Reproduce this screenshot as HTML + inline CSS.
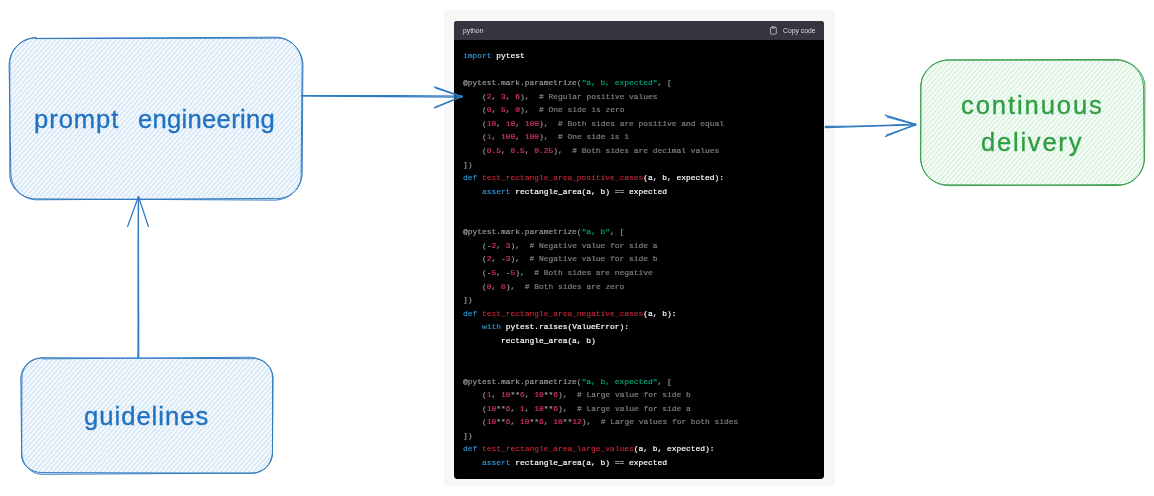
<!DOCTYPE html>
<html lang="en"><head><meta charset="utf-8"><title>prompt engineering to continuous delivery</title>
<style>
html,body{margin:0;padding:0;background:#fff;}
body{width:1154px;height:496px;position:relative;overflow:hidden;font-family:"Liberation Sans",sans-serif;}
.panel{position:absolute;left:444.2px;top:10.2px;width:391.3px;height:475.7px;background:#f7f7f8;}
.cb{position:absolute;left:454.1px;top:20.8px;width:369.9px;height:457.9px;background:#000;border-radius:3.4px;overflow:hidden;}
.hd{position:absolute;left:0;top:0;right:0;height:19.2px;background:#343541;color:#d9d9e3;font-size:6.8px;line-height:18.6px;}
.hd .lang{will-change:transform;position:absolute;left:8.9px;top:1.1px;}
.hd .copy{will-change:transform;position:absolute;left:328.5px;top:1.1px;white-space:nowrap;}
.hd svg{position:absolute;left:315.1px;top:5.4px;width:8.8px;height:8.8px;}
pre{position:absolute;left:8.9px;top:27.8px;margin:0;font-family:"Liberation Mono",monospace;font-size:7.91px;line-height:13.56px;color:#fff;white-space:pre;will-change:transform;-webkit-text-stroke:0.18px currentColor;}
pre .t{-webkit-text-stroke:0}.k{color:#2e95d3}.s{color:#00a67d}.n{color:#df3079}.t{color:#e62b3c}.c{color:#808080}.m{color:#999}
.draw{position:absolute;left:0;top:0;}
.hand{will-change:transform;position:absolute;white-space:pre;font-size:25.6px;line-height:30px;-webkit-text-stroke:0.35px currentColor;}
.b{color:#1f72c1}.g{color:#2f9e44}
</style></head><body>
<div class="panel"></div>
<div class="cb">
<div class="hd"><span class="lang">python</span>
<svg viewBox="0 0 24 24" fill="none" stroke="#d9d9e3" stroke-width="2" stroke-linecap="round" stroke-linejoin="round"><path d="M16 4h2a2 2 0 0 1 2 2v14a2 2 0 0 1-2 2H6a2 2 0 0 1-2-2V6a2 2 0 0 1 2-2h2"/><rect x="8" y="2" width="8" height="4" rx="1" ry="1"/></svg>
<span class="copy">Copy code</span></div>
<pre><span class="k">import</span> pytest

<span class="m">@pytest.mark.parametrize(</span><span class="s">"a, b, expected"</span><span class="m">, [</span>
<span class="m">    (</span><span class="n">2</span><span class="m">, </span><span class="n">3</span><span class="m">, </span><span class="n">6</span><span class="m">),  </span><span class="c"># Regular positive values</span>
<span class="m">    (</span><span class="n">0</span><span class="m">, </span><span class="n">5</span><span class="m">, </span><span class="n">0</span><span class="m">),  </span><span class="c"># One side is zero</span>
<span class="m">    (</span><span class="n">10</span><span class="m">, </span><span class="n">10</span><span class="m">, </span><span class="n">100</span><span class="m">),  </span><span class="c"># Both sides are positive and equal</span>
<span class="m">    (</span><span class="n">1</span><span class="m">, </span><span class="n">100</span><span class="m">, </span><span class="n">100</span><span class="m">),  </span><span class="c"># One side is 1</span>
<span class="m">    (</span><span class="n">0.5</span><span class="m">, </span><span class="n">0.5</span><span class="m">, </span><span class="n">0.25</span><span class="m">),  </span><span class="c"># Both sides are decimal values</span>
<span class="m">])</span>
<span class="k">def</span> <span class="t">test_rectangle_area_positive_cases</span>(a, b, expected):
    <span class="k">assert</span> rectangle_area(a, b) == expected


<span class="m">@pytest.mark.parametrize(</span><span class="s">"a, b"</span><span class="m">, [</span>
<span class="m">    (-</span><span class="n">2</span><span class="m">, </span><span class="n">3</span><span class="m">),  </span><span class="c"># Negative value for side a</span>
<span class="m">    (</span><span class="n">2</span><span class="m">, -</span><span class="n">3</span><span class="m">),  </span><span class="c"># Negative value for side b</span>
<span class="m">    (-</span><span class="n">5</span><span class="m">, -</span><span class="n">5</span><span class="m">),  </span><span class="c"># Both sides are negative</span>
<span class="m">    (</span><span class="n">0</span><span class="m">, </span><span class="n">0</span><span class="m">),  </span><span class="c"># Both sides are zero</span>
<span class="m">])</span>
<span class="k">def</span> <span class="t">test_rectangle_area_negative_cases</span>(a, b):
    <span class="k">with</span> pytest.raises(ValueError):
        rectangle_area(a, b)


<span class="m">@pytest.mark.parametrize(</span><span class="s">"a, b, expected"</span><span class="m">, [</span>
<span class="m">    (</span><span class="n">1</span><span class="m">, </span><span class="n">10</span><span class="m">**</span><span class="n">6</span><span class="m">, </span><span class="n">10</span><span class="m">**</span><span class="n">6</span><span class="m">),  </span><span class="c"># Large value for side b</span>
<span class="m">    (</span><span class="n">10</span><span class="m">**</span><span class="n">6</span><span class="m">, </span><span class="n">1</span><span class="m">, </span><span class="n">10</span><span class="m">**</span><span class="n">6</span><span class="m">),  </span><span class="c"># Large value for side a</span>
<span class="m">    (</span><span class="n">10</span><span class="m">**</span><span class="n">6</span><span class="m">, </span><span class="n">10</span><span class="m">**</span><span class="n">6</span><span class="m">, </span><span class="n">10</span><span class="m">**</span><span class="n">12</span><span class="m">),  </span><span class="c"># Large values for both sides</span>
<span class="m">])</span>
<span class="k">def</span> <span class="t">test_rectangle_area_large_values</span>(a, b, expected):
    <span class="k">assert</span> rectangle_area(a, b) == expected</pre>
</div>
<svg class="draw" width="1154" height="496" viewBox="0 0 1154 496">
<defs>
<pattern id="hb" width="3.52" height="3.52" patternUnits="userSpaceOnUse" patternTransform="rotate(-49)">
<rect width="3.52" height="3.52" fill="#f6fafe"/><line x1="0" y1="1" x2="3.52" y2="1" stroke="#b9d3ed" stroke-width="0.85"/></pattern>
<pattern id="hg" width="3.52" height="3.52" patternUnits="userSpaceOnUse" patternTransform="rotate(-49)">
<rect width="3.52" height="3.52" fill="#f7fdf8"/><line x1="0" y1="1" x2="3.52" y2="1" stroke="#bfe5c6" stroke-width="0.85"/></pattern>
</defs>
<path d="M36.0,37.7 L275.9,37.7 C290.3,37.7 301.9,49.3 301.9,63.7 L301.9,173.4 C301.9,187.8 290.3,199.4 275.9,199.4 L36.0,199.4 C21.6,199.4 10.0,187.8 10.0,173.4 L10.0,63.7 C10.0,49.3 21.6,37.7 36.0,37.7Z" fill="url(#hb)" stroke="none"/>
<path d="M35.3,38.4 L276.4,37.2 C290.3,37.7 301.8,49.3 302.2,64.3 L301.1,172.5 C302.6,187.8 290.3,199.3 276.4,198.4 L35.9,199.8 C21.6,198.9 10.9,187.8 10.8,172.5 L9.1,63.8 C10.9,49.3 21.6,37.5 36.0,37.7Z" fill="none" stroke="#2f79c0" stroke-width="0.98"/>
<path d="M35.5,38.6 L275.2,38.1 C290.3,36.9 301.4,49.3 302.9,63.1 L302.2,173.3 C301.8,187.8 290.3,199.4 275.3,200.1 L35.2,198.9 C21.6,198.4 9.5,187.8 9.8,174.2 L9.8,62.9 C9.5,49.3 21.6,38.7 36.0,37.7Z" fill="none" stroke="#2f79c0" stroke-width="0.98"/>

<path d="M41.7,358.0 L252.3,358.0 C263.3,358.0 272.3,367.0 272.3,378.0 L272.3,453.3 C272.3,464.3 263.3,473.3 252.3,473.3 L41.7,473.3 C30.7,473.3 21.7,464.3 21.7,453.3 L21.7,378.0 C21.7,367.0 30.7,358.0 41.7,358.0Z" fill="url(#hb)" stroke="none"/>
<path d="M42.6,358.9 L251.4,357.2 C263.3,358.7 272.8,367.0 272.6,377.6 L272.5,453.5 C272.5,464.3 263.3,472.6 252.2,473.1 L42.1,474.3 C30.7,474.2 21.8,464.3 21.6,452.8 L20.8,377.1 C21.6,367.0 30.7,357.6 41.7,358.0Z" fill="none" stroke="#2f79c0" stroke-width="0.98"/>
<path d="M41.6,357.7 L251.6,358.7 C263.3,357.0 272.3,367.0 273.1,377.2 L272.4,453.5 C271.4,464.3 263.3,473.1 252.7,473.2 L42.2,472.6 C30.7,472.8 20.9,464.3 21.7,454.1 L21.9,378.5 C21.5,367.0 30.7,358.5 41.7,358.0Z" fill="none" stroke="#2f79c0" stroke-width="0.98"/>

<path d="M948.5,60.0 L1116.6,60.0 C1132.1,60.0 1144.6,72.5 1144.6,88.0 L1144.6,157.5 C1144.6,173.0 1132.1,185.5 1116.6,185.5 L948.5,185.5 C933.0,185.5 920.5,173.0 920.5,157.5 L920.5,88.0 C920.5,72.5 933.0,60.0 948.5,60.0Z" fill="url(#hg)" stroke="none"/>
<path d="M948.0,60.1 L1116.3,60.2 C1132.1,60.3 1143.7,72.5 1143.6,88.7 L1144.1,157.0 C1145.6,173.0 1132.1,185.4 1117.3,185.5 L948.8,184.8 C933.0,185.8 921.2,173.0 920.5,158.0 L920.8,87.1 C921.0,72.5 933.0,60.2 948.5,60.0Z" fill="none" stroke="#3b9f4e" stroke-width="0.98"/>
<path d="M948.6,59.9 L1116.8,59.4 C1132.1,60.6 1145.2,72.5 1144.9,87.3 L1144.6,157.2 C1144.1,173.0 1132.1,186.4 1117.6,184.6 L949.2,185.7 C933.0,185.3 920.1,173.0 920.8,157.4 L920.9,88.3 C919.8,72.5 933.0,60.5 948.5,60.0Z" fill="none" stroke="#3b9f4e" stroke-width="0.98"/>

<g fill="none" stroke="#2f79c0" stroke-width="1.25" stroke-linecap="round">
<path d="M301.5,95.5 C350,95.4 410,95.8 462.2,96.0"/>
<path d="M301.5,96.0 C360,96.5 420,96.4 462.2,97.1"/>
<path d="M462.2,96.5 L434.3,86.8"/><path d="M462.2,96.9 L436,88.2"/>
<path d="M462.2,96.5 L434.6,107.9"/><path d="M462.2,96.3 L435.5,107.0"/>
<path d="M138.0,357.5 C137.9,300 138.3,250 138.4,196.5"/>
<path d="M138.7,357.5 C138.8,300 138.1,250 138.6,196.8"/>
<path d="M138.5,196.5 L127.6,226.5"/><path d="M138.5,196.5 L148.4,226.5"/>
<path d="M825.3,127.6 C850,127.0 890,125.4 915.7,124.9"/>
<path d="M825.3,126.3 C855,126.3 890,125.2 915.7,124.0"/>
<path d="M915.7,124.4 L885.1,115"/><path d="M915.7,124.6 L887,116.8"/>
<path d="M915.7,124.4 L885.5,136.5"/><path d="M915.7,124.8 L886.5,135.0"/>
</g>
</svg>
<div class="hand b" id="t1" style="left:34.3px;top:103.7px;"><span style="letter-spacing:0.95px">prompt</span><span style="letter-spacing:11.6px"> </span><span style="letter-spacing:0.28px">engineering</span></div>
<div class="hand b" id="t2" style="left:84.3px;top:400.9px;letter-spacing:1.0px">guidelines</div>
<div class="hand g" id="t3" style="left:961.2px;top:89.7px;letter-spacing:1.9px">continuous</div>
<div class="hand g" id="t4" style="left:980.8px;top:126.9px;letter-spacing:1.75px">delivery</div>
</body></html>
